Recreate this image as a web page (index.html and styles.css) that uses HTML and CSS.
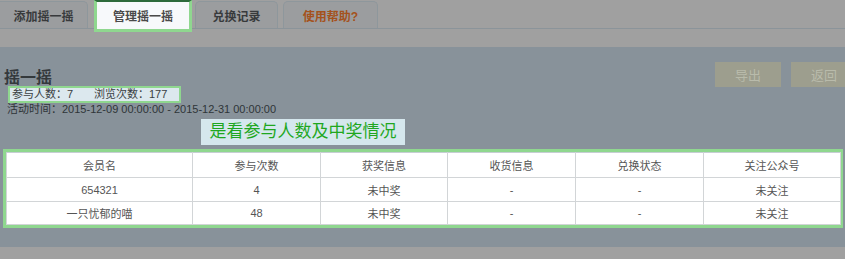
FILE: index.html
```html
<!DOCTYPE html>
<html lang="zh-CN">
<head>
<meta charset="utf-8">
<title>管理摇一摇</title>
<link rel="stylesheet" href="styles.css">
</head>
<body>
<div class="tabs">
  <div class="tab tab-first">添加摇一摇</div>
  <div class="tab tab-active">管理摇一摇</div>
  <div class="tab tab-third">兑换记录</div>
  <div class="tab tab-help">使用帮助?</div>
</div>
<div class="gap"></div>
<div class="main">
  <div class="topbar">
    <div class="info">
      <h1 class="title">摇一摇</h1>
      <div class="stats"><span class="stat-a">参与人数：7</span><span>浏览次数：177</span></div>
      <div class="time">活动时间：2015-12-09 00:00:00 - 2015-12-31 00:00:00</div>
    </div>
    <div class="actions">
      <div class="btn">导出</div>
      <div class="btn">返回</div>
    </div>
  </div>
  <div class="callout">是看参与人数及中奖情况</div>
  <div class="table-wrap">
    <table class="grid">
      <colgroup>
        <col class="c1"><col class="c2"><col class="c3"><col class="c4"><col class="c5"><col class="c6">
      </colgroup>
      <tr class="r-head"><td>会员名</td><td>参与次数</td><td>获奖信息</td><td>收货信息</td><td>兑换状态</td><td>关注公众号</td></tr>
      <tr class="r-body"><td>654321</td><td>4</td><td>未中奖</td><td>-</td><td>-</td><td>未关注</td></tr>
      <tr class="r-last"><td>一只忧郁的喵</td><td>48</td><td>未中奖</td><td>-</td><td>-</td><td>未关注</td></tr>
    </table>
  </div>
</div>
<div class="foot"></div>
</body>
</html>
```
FILE: styles.css
```css
html, body {
  margin: 0;
  padding: 0;
}
body {
  width: 845px;
  height: 259px;
  overflow: hidden;
  background: #a0a0a0;
  font-family: "Liberation Sans", "Noto Sans CJK SC", sans-serif;
  font-size: 11px;
  color: #33383b;
}
.tabs {
  display: flex;
  align-items: flex-end;
  height: 28px;
  border-bottom: 1px solid #8b949a;
  background: #a0a0a0;
}
.tab {
  box-sizing: border-box;
  height: 27px;
  background: #9b9d9f;
  border: 1px solid #8e979c;
  border-bottom: none;
  border-radius: 5px 5px 0 0;
  display: flex;
  align-items: center;
  justify-content: center;
  font-size: 12px;
  font-weight: bold;
  color: #383a3c;
  padding-top: 1px;
}
.tab-first {
  width: 88px;
  margin-right: 6px;
  border-left: none;
  border-radius: 0 5px 0 0;
}
.tab-active {
  align-self: flex-start;
  width: 98px;
  height: 32px;
  margin-right: 3px;
  margin-bottom: -4px;
  background: #f7f9fb;
  border: 3px solid #8fd78f;
  border-top: 2px solid #2d6a3b;
  border-radius: 0;
  color: #4a4a4a;
  padding-top: 0;
  position: relative;
  z-index: 1;
}
.tab-third {
  width: 83px;
  margin-right: 5px;
}
.tab-help {
  width: 95px;
  color: #a4521c;
}
.gap {
  height: 18px;
}
.main {
  background: #88929a;
  padding: 15px 0 19px 0;
}
.topbar {
  display: flex;
  align-items: flex-start;
}
.info {
  padding-left: 4px;
}
.title {
  margin: 8px 0 0 0;
  font-size: 16px;
  line-height: 16px;
  font-weight: bold;
  color: #34393c;
}
.stats {
  box-sizing: border-box;
  margin-left: 4px;
  width: 173px;
  height: 17px;
  border: 2px solid #8fd78f;
  background: #dce8ee;
  padding-left: 2px;
  line-height: 13px;
  color: #3a3f42;
  display: flex;
}
.stat-a {
  width: 82px;
}
.time {
  margin-left: 3px;
  line-height: 13px;
  color: #2f3538;
}
.actions {
  margin-left: auto;
  margin-right: -12px;
  display: flex;
  gap: 10px;
}
.btn {
  width: 66px;
  height: 25px;
  background: #9d9e8e;
  color: #b9bbab;
  font-size: 13px;
  display: flex;
  align-items: center;
  justify-content: center;
}
.callout {
  margin: 3px 0 0 201px;
  width: 204px;
  height: 26px;
  box-sizing: border-box;
  background: #d5e7ed;
  color: #1fa71f;
  font-size: 17px;
  line-height: 26px;
  text-align: center;
  white-space: nowrap;
}
.table-wrap {
  margin: 4px 0 0 3px;
  width: 840px;
  box-sizing: border-box;
  border: 3px solid #8fd78f;
  background: #fff;
}
.grid {
  width: 834px;
  border-collapse: collapse;
  table-layout: fixed;
  background: #fff;
}
.grid td {
  border: 1px solid #d2d5d7;
  padding: 0;
  text-align: center;
  color: #555;
  font-size: 11px;
}
.grid .r-head td {
  border-top-color: #c6ced3;
}
.c1 { width: 186px; }
.c2 { width: 128px; }
.c3 { width: 127px; }
.c4 { width: 128px; }
.c5 { width: 128px; }
.c6 { width: 137px; }
.r-head { height: 25px; }
.r-body { height: 24px; }
.r-last { height: 23px; }
.foot {
  height: 20px;
  background: #a0a0a0;
}
```
